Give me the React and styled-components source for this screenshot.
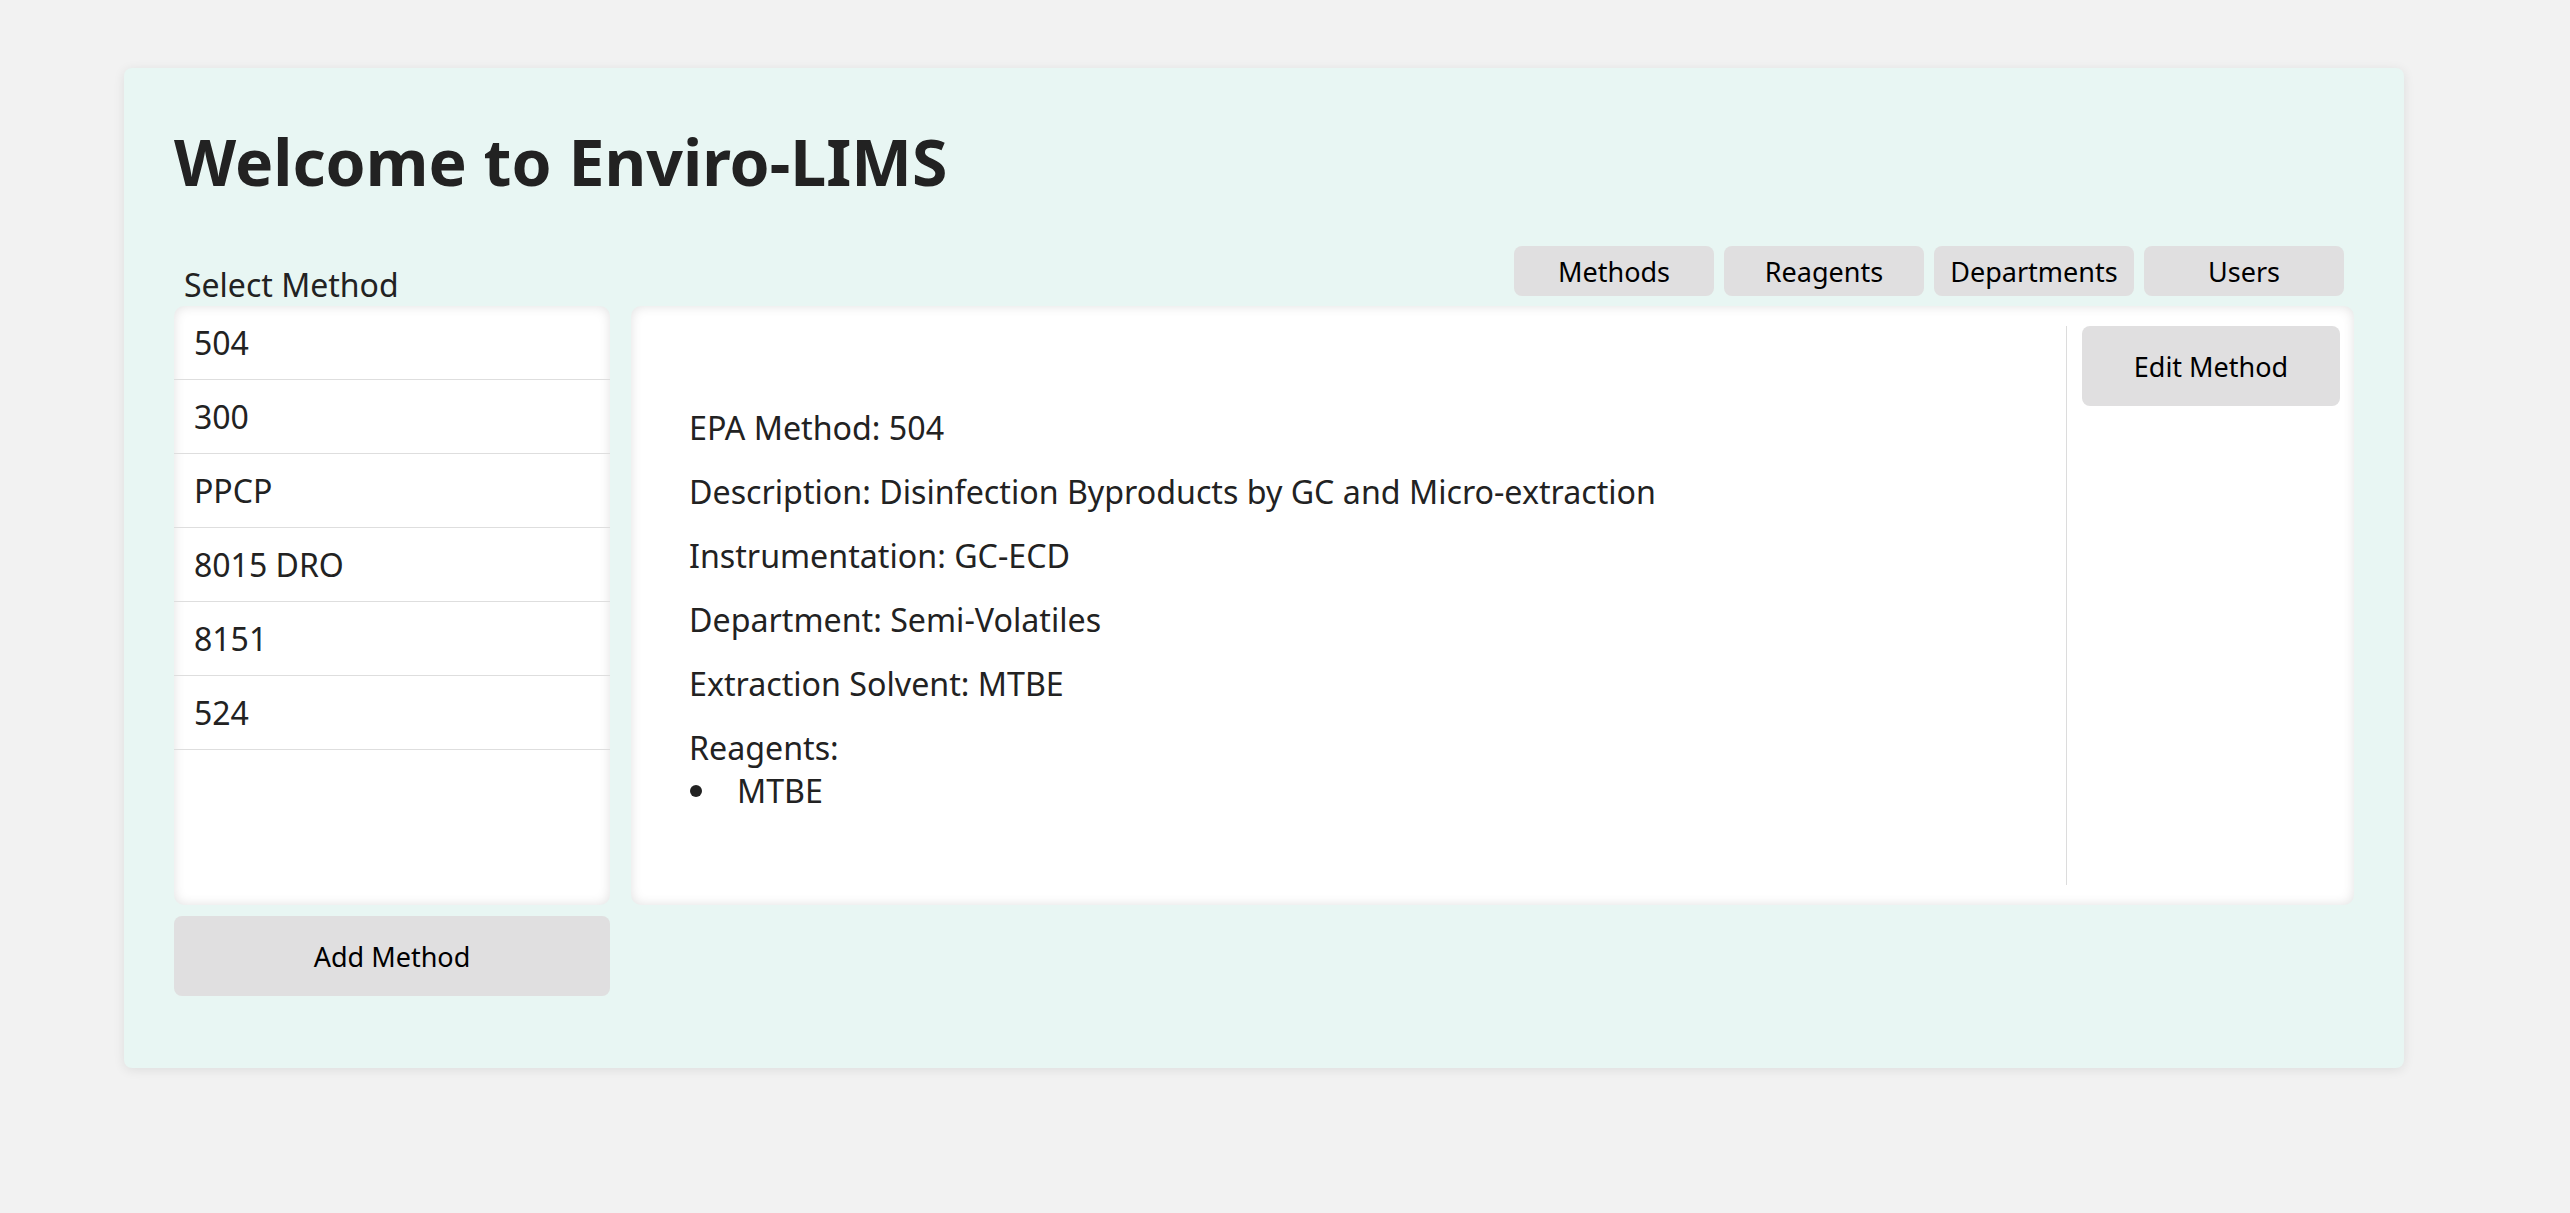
import React from "react";
import styled, { createGlobalStyle } from "styled-components";

const GlobalStyle = createGlobalStyle`
  html, body {
    margin: 0;
    padding: 0;
    background: #f2f2f2;
    font-family: "Noto Sans", "Open Sans", sans-serif;
    color: #222;
  }
  * { box-sizing: border-box; }
`;

const Page = styled.div`
  padding: 68px 0 0 124px;
  min-height: 1213px;
`;

const Card = styled.main`
  width: 2280px;
  height: 1000px;
  padding: 50px 50px;
  background: #e8f6f3;
  border-radius: 8px;
  box-shadow: 0 2px 12px rgba(0, 0, 0, 0.09);
`;

const Title = styled.h1`
  margin: 0 0 41px;
  font-size: 64.3px;
  font-weight: 700;
  line-height: 87px;
  color: #222;
`;

const HeaderRow = styled.div`
  display: flex;
  align-items: flex-end;
  justify-content: space-between;
`;

const Label = styled.div`
  width: 436px;
  padding-left: 10px;
  font-size: 32px;
  line-height: normal;
`;

const Tabs = styled.nav`
  display: flex;
  margin-bottom: 10px;
`;

const GreyButton = styled.button`
  border: none;
  background: #e0dfe0;
  color: #000;
  font-family: "Noto Sans", "Open Sans", sans-serif;
  font-size: 27px;
  border-radius: 8px;
  cursor: pointer;
  padding: 0;
`;

const TabButton = styled(GreyButton)`
  width: 200px;
  height: 50px;
  margin-right: 10px;
`;

const MainRow = styled.div`
  display: flex;
  gap: 21px;
  align-items: flex-start;
`;

const LeftColumn = styled.div`
  width: 436px;
  display: flex;
  flex-direction: column;
  gap: 11px;
`;

const MethodList = styled.ul`
  list-style: none;
  margin: 0;
  padding: 0;
  height: 599px;
  background: #fff;
  border-radius: 10px;
  box-shadow: inset 0 0 12px rgba(0, 0, 0, 0.12);
  overflow: hidden;
`;

const MethodItem = styled.li`
  height: 74px;
  display: flex;
  align-items: center;
  padding: 0 20px;
  font-size: 32px;
  border-bottom: 1px solid #dedede;
  cursor: pointer;
`;

const WideButton = styled(GreyButton)`
  width: 100%;
  height: 80px;
`;

const Panel = styled.section`
  flex: 1;
  height: 599px;
  display: flex;
  padding: 20px 14px 20px 20px;
  background: #fff;
  border-radius: 10px;
  box-shadow: inset 0 0 12px rgba(0, 0, 0, 0.12);
`;

const Details = styled.div`
  flex: 1;
  padding: 80px 38px 0;
  display: flex;
  flex-direction: column;
  gap: 21px;
  font-size: 32.2px;
  line-height: normal;
`;

const Line = styled.div``;

const Bullets = styled.ul`
  list-style: none;
  margin: 0;
  padding: 0;
`;

const Bullet = styled.li`
  display: flex;
  align-items: center;
  &::before {
    content: "";
    width: 12px;
    height: 12px;
    margin: 0 35px 0 1px;
    border-radius: 50%;
    background: #222;
  }
`;

const Sidebar = styled.aside`
  width: 274px;
  border-left: 1px solid #dcdcdc;
  padding-left: 15px;
`;

const methods = ["504", "300", "PPCP", "8015 DRO", "8151", "524"];
const tabs = ["Methods", "Reagents", "Departments", "Users"];

export default function App() {
  return (
    <>
      <GlobalStyle />
      <Page>
        <Card>
          <Title>Welcome to Enviro-LIMS</Title>
          <HeaderRow>
            <Label>Select Method</Label>
            <Tabs>
              {tabs.map((t) => (
                <TabButton key={t}>{t}</TabButton>
              ))}
            </Tabs>
          </HeaderRow>
          <MainRow>
            <LeftColumn>
              <MethodList>
                {methods.map((m) => (
                  <MethodItem key={m}>{m}</MethodItem>
                ))}
              </MethodList>
              <WideButton>Add Method</WideButton>
            </LeftColumn>
            <Panel>
              <Details>
                <Line>EPA Method: 504</Line>
                <Line>Description: Disinfection Byproducts by GC and Micro-extraction</Line>
                <Line>Instrumentation: GC-ECD</Line>
                <Line>Department: Semi-Volatiles</Line>
                <Line>Extraction Solvent: MTBE</Line>
                <div>
                  <Line>Reagents:</Line>
                  <Bullets>
                    <Bullet>MTBE</Bullet>
                  </Bullets>
                </div>
              </Details>
              <Sidebar>
                <WideButton>Edit Method</WideButton>
              </Sidebar>
            </Panel>
          </MainRow>
        </Card>
      </Page>
    </>
  );
}
